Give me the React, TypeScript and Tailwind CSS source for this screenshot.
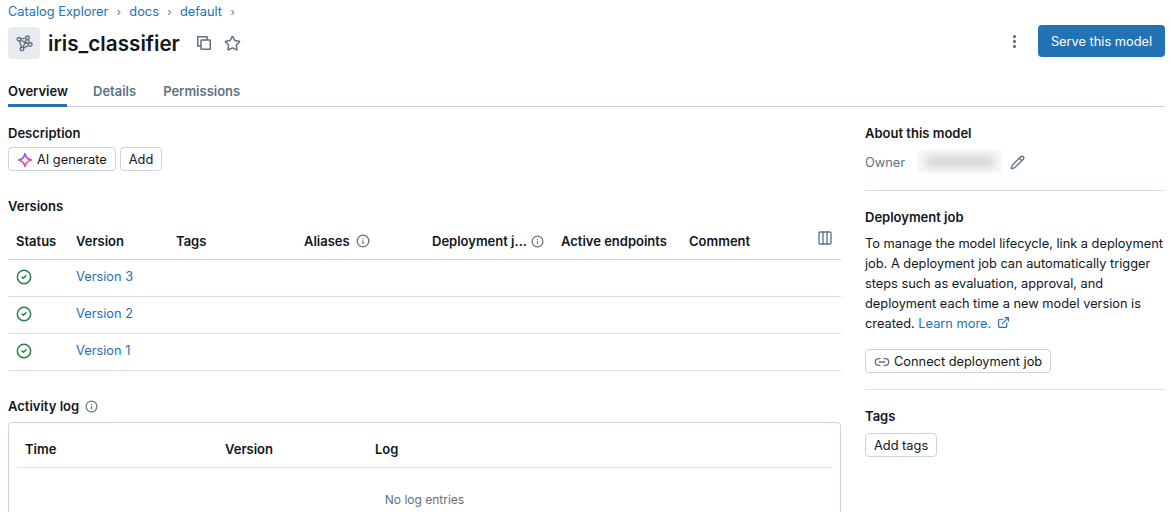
import { CircleCheck, Columns3, ExternalLink, Info, Link2, MoreVertical, Pencil, Star } from "lucide-react";

const columns = [
  { label: "Status", width: "w-[60px]" },
  { label: "Version", width: "w-[100px]" },
  { label: "Tags", width: "w-[128px]" },
  { label: "Aliases", width: "w-[128px]", info: true },
  { label: "Deployment j...", width: "w-[129px]", info: true, small: true },
  { label: "Active endpoints", width: "w-[128px]" },
  { label: "Comment", width: "w-[120px]" },
];

const versions = ["Version 3", "Version 2", "Version 1"];

function ModelIcon() {
  return (
    <svg width="17" height="17" viewBox="0 0 16 16" fill="none" stroke="#5f7281" strokeWidth="1.3">
      <circle cx="2.8" cy="4" r="1.7" />
      <circle cx="10.8" cy="2.6" r="1.7" />
      <circle cx="13.4" cy="9" r="1.7" />
      <circle cx="5.6" cy="13.2" r="1.7" />
      <path d="M4.5 3.7 9.1 2.9M11.5 4.2 12.7 7.4M11.9 9.8 7.1 12.4M5.2 11.5 3.2 5.7M4.2 5 12 8.1M9.9 4.1 6.4 11.7" />
    </svg>
  );
}

function CopyIcon() {
  return (
    <svg width="16" height="16" viewBox="0 0 16 16" fill="none" stroke="#5f7281" strokeWidth="1.5" className="ml-4">
      <path d="M5 11H1.75V1.75H11V5" />
      <rect x="5" y="5" width="9.25" height="9.25" rx="0.5" />
    </svg>
  );
}

function SparkleIcon() {
  return (
    <svg width="16" height="16" viewBox="0 0 16 16" fill="none">
      <defs>
        <linearGradient id="ai-gradient" x1="3" y1="2" x2="11" y2="15" gradientUnits="userSpaceOnUse">
          <stop offset="0" stopColor="#4299e0" />
          <stop offset="0.5" stopColor="#ca42e0" />
          <stop offset="1" stopColor="#ff5f46" />
        </linearGradient>
      </defs>
      <path
        d="M8 1.5C8.6 5.2 10.4 7.2 14.5 8C10.4 8.8 8.6 10.8 8 14.5C7.4 10.8 5.6 8.8 1.5 8C5.6 7.2 7.4 5.2 8 1.5Z"
        stroke="url(#ai-gradient)"
        strokeWidth="1.6"
        strokeLinejoin="round"
      />
    </svg>
  );
}

function OutlineButton({ children }: { children: React.ReactNode }) {
  return (
    <button className="flex h-6 items-center rounded border border-[#cbd5e1] bg-white px-2 pt-px text-[12.8px] text-[#11171c]">
      {children}
    </button>
  );
}

function Crumb({ label }: { label: string }) {
  return (
    <>
      <span>{label}</span>
      <span className="w-[21px] text-center text-[11px] text-[#5f7281]">›</span>
    </>
  );
}

export default function App() {
  return (
    <div
      className="h-[512px] w-[1169px] overflow-hidden bg-white pl-2 pr-1 text-[12.8px] leading-5 text-[#11171c]"
      style={{ fontFamily: "Inter, 'Liberation Sans', sans-serif" }}
    >
      {/* Breadcrumb */}
      <div className="flex h-[23px] items-center pt-[1px] text-[#2272b4]">
        <Crumb label="Catalog Explorer" />
        <Crumb label="docs" />
        <Crumb label="default" />
      </div>

      {/* Title */}
      <div className="mt-1 flex h-8 items-center">
        <div className="flex h-8 w-8 items-center justify-center rounded bg-[#e8ecf0]">
          <ModelIcon />
        </div>
        <h1 className="ml-2 pt-[2px] text-[20.7px] font-semibold leading-7">iris_classifier</h1>
        <CopyIcon />
        <Star size={17} strokeWidth={2.1} className="ml-3 text-[#5f7281]" />
        <MoreVertical size={17} strokeWidth={2.6} className="mb-1 ml-auto text-[#5f7281]" />
        <button className="mb-1 ml-[15px] h-8 w-[127px] rounded bg-[#2272b4] pt-px text-white">Serve this model</button>
      </div>

      {/* Tabs */}
      <div className="mt-[17px] flex h-[31px] gap-[26px] border-b border-[#cbd5e1] pt-[5px] text-[13px] font-semibold text-[#5f7281]">
        <span className="h-[26px] w-[59px] border-b-[3px] border-[#2272b4] text-[#11171c]">Overview</span>
        <span>Details</span>
        <span className="ml-px">Permissions</span>
      </div>

      <div className="mt-4 flex">
        {/* Left column */}
        <div className="w-[833px]">
          <h2 className="text-[13px] font-semibold">Description</h2>
          <div className="mt-[4px] flex gap-1">
            <OutlineButton>
              <span className="mr-[4px] flex">
                <SparkleIcon />
              </span>
              AI generate
            </OutlineButton>
            <OutlineButton>Add</OutlineButton>
          </div>

          <h2 className="mt-[25px] text-[13px] font-semibold">Versions</h2>
          <div className="mt-[7px]">
            <div className="relative flex h-[37px] items-center border-b border-[#cbd5e1] text-[13px] font-semibold">
              {columns.map((col) => (
                <div key={col.label} className={`flex items-center ${col.small ? "gap-[4px]" : "gap-[6px]"} px-2 ${col.width}`}>
                  <span className="whitespace-nowrap">{col.label}</span>
                  {col.info && <Info size={col.small ? 13 : 14} strokeWidth={2.2} className="shrink-0 text-[#5f7281]" />}
                </div>
              ))}
              <Columns3 size={16} className="absolute right-2 top-[7px] text-[#5f7281]" />
            </div>
            {versions.map((v) => (
              <div key={v} className="flex h-[37px] items-center border-b border-[#d8dfe6] pb-[2px]">
                <div className="w-[60px] px-2">
                  <CircleCheck size={16} strokeWidth={2.2} className="mb-px text-[#277c43]" />
                </div>
                <div className="px-2 text-[#2272b4]">{v}</div>
              </div>
            ))}
          </div>

          <div className="mt-[25px] flex items-center gap-[6px] text-[13px] font-semibold">
            Activity log
            <Info size={13} strokeWidth={2.2} className="text-[#5f7281]" />
          </div>
          <div className="mt-[6px] h-[120px] rounded border border-[#cbd5e1] px-2">
            <div className="flex h-[45px] items-center border-b border-[#d8dfe6] pt-[8px] text-[13px] font-semibold">
              <div className="w-[200px] px-2">Time</div>
              <div className="w-[150px] px-2">Version</div>
              <div className="px-2">Log</div>
            </div>
            <div className="mt-[22px] text-center text-[12px] text-[#5f7281]">No log entries</div>
          </div>
        </div>

        {/* Right sidebar */}
        <aside className="ml-6 w-[300px]">
          <h2 className="text-[13px] font-semibold">About this model</h2>
          <div className="mt-[7px] flex h-[23px] items-center">
            <span className="w-[52px] pt-[2px] text-[#5f7281]">Owner</span>
            <div className="flex h-[23px] w-[85px] items-center justify-center bg-[#f8f8f8]">
              <div className="h-[11px] w-[70px] rounded-full bg-[#d4d4d4] blur-[4px]" />
            </div>
            <Pencil size={15} strokeWidth={2.1} className="ml-2 mt-px text-[#5f7281]" />
          </div>
          <div className="mt-[17px] border-t border-[#d8dfe6] pt-[16px]">
            <h2 className="text-[13px] font-semibold">Deployment job</h2>
            <p className="mt-[7px]">
              To manage the model lifecycle, link a deployment job. A deployment job can automatically trigger steps
              such as evaluation, approval, and deployment each time a new model version is created.{" "}
              <span className="text-[#2272b4]">
                Learn more.
                <ExternalLink size={13} strokeWidth={2.2} className="ml-[6px] inline align-[-1px]" />
              </span>
            </p>
            <div className="mt-[15px] flex">
              <OutlineButton>
                <Link2 size={16} className="mr-1 text-[#5f7281]" />
                Connect deployment job
              </OutlineButton>
            </div>
          </div>
          <div className="mt-[16px] border-t border-[#d8dfe6] pt-[16px]">
            <h2 className="text-[13px] font-semibold">Tags</h2>
            <div className="mt-[7px] flex">
              <OutlineButton>Add tags</OutlineButton>
            </div>
          </div>
        </aside>
      </div>
    </div>
  );
}
